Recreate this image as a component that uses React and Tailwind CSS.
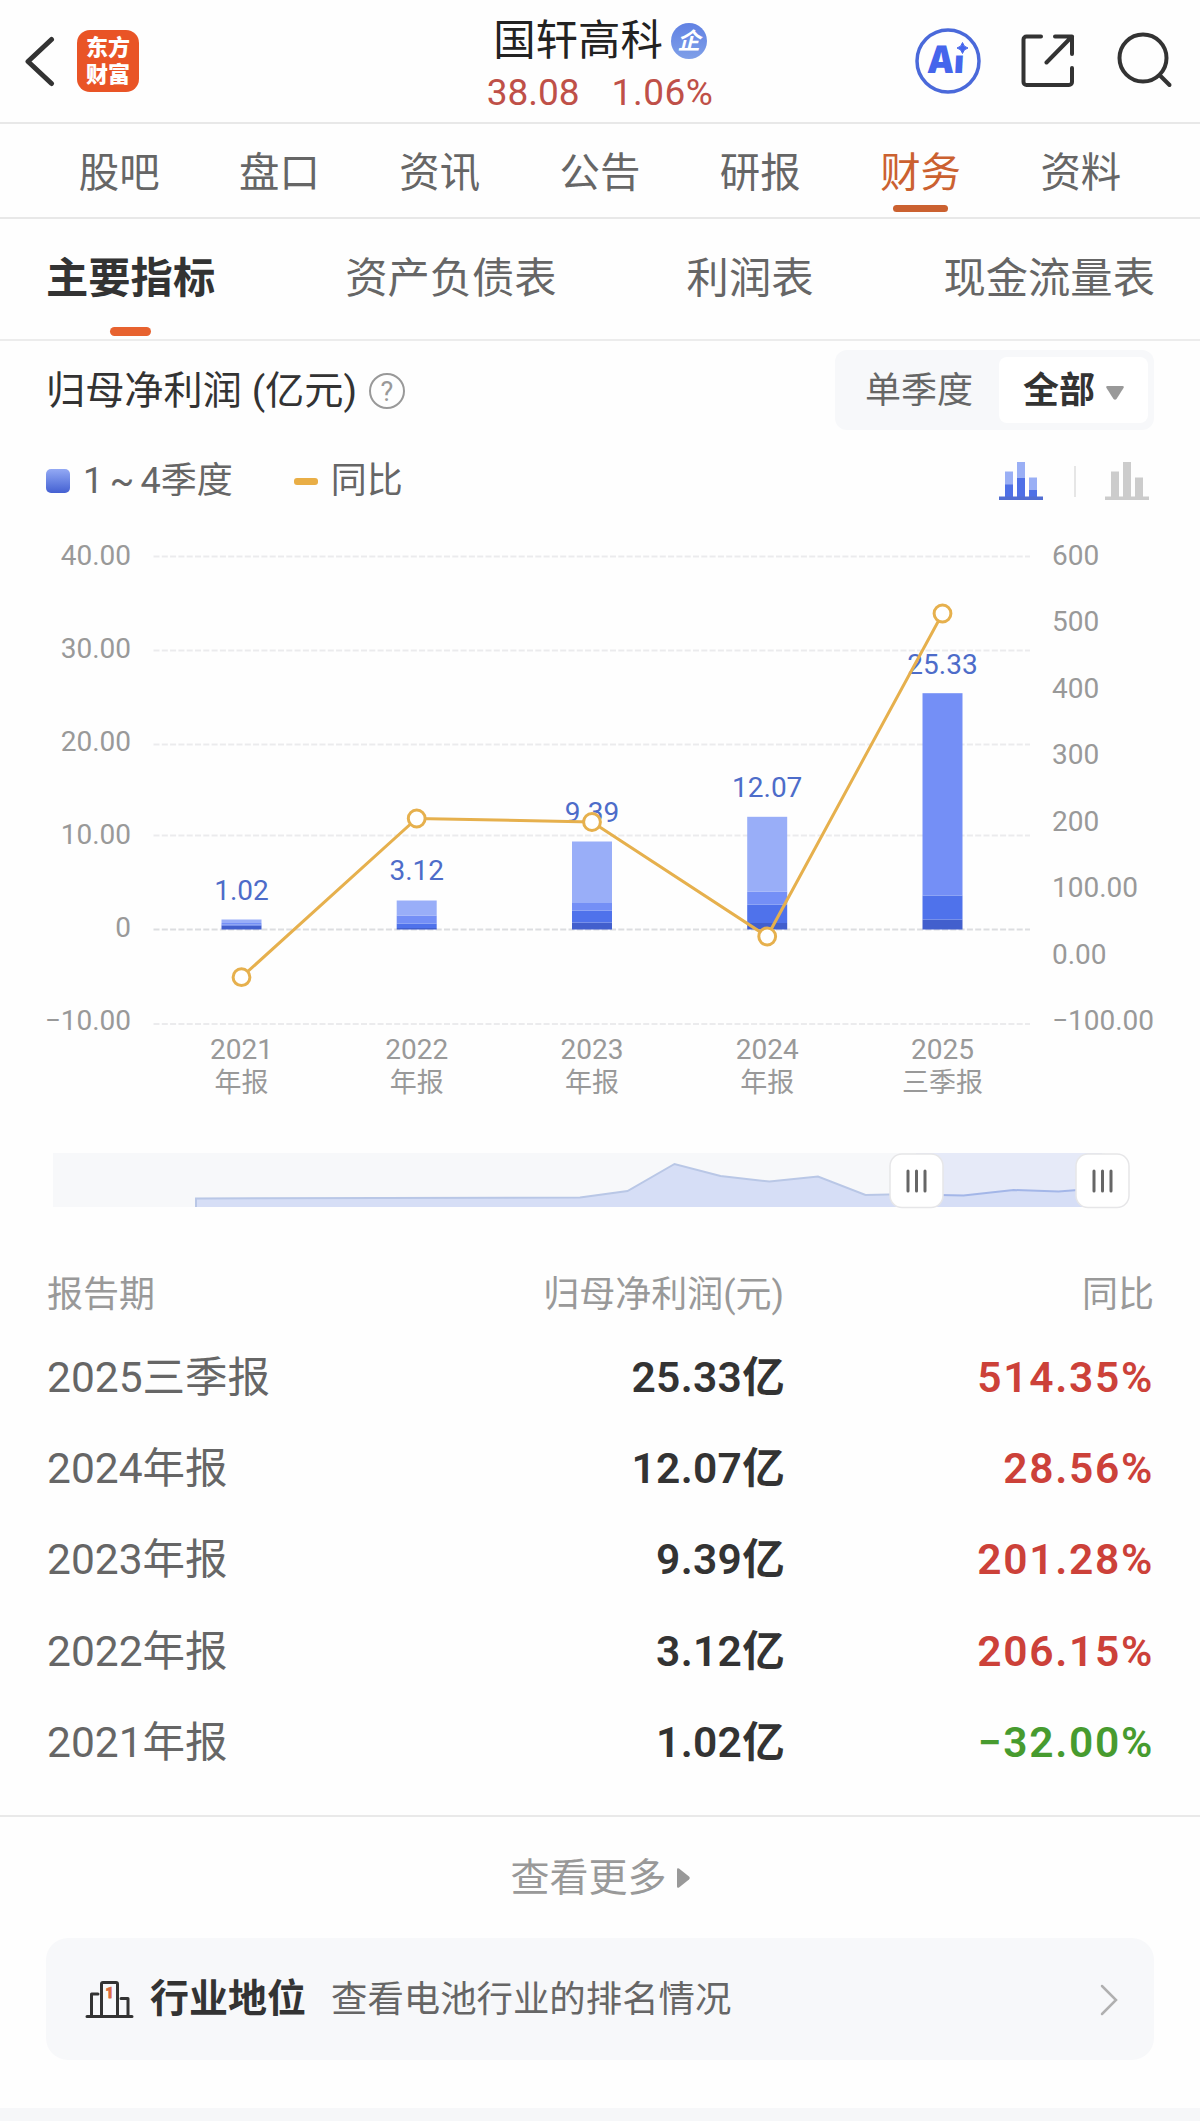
const NAV_TABS = ["股吧", "盘口", "资讯", "公告", "研报", "财务", "资料"];

const SUB_TABS = ["主要指标", "资产负债表", "利润表", "现金流量表"];

const ROWS = [
  {period: "2025三季报", profit: "25.33亿", yoy: "514.35%"},
  {period: "2024年报", profit: "12.07亿", yoy: "28.56%"},
  {period: "2023年报", profit: "9.39亿", yoy: "201.28%"},
  {period: "2022年报", profit: "3.12亿", yoy: "206.15%"},
  {period: "2021年报", profit: "1.02亿", yoy: "−32.00%"},
];

const LEFT_AXIS = [
  {label: "40.00", y: 555, line: 557},
  {label: "30.00", y: 648, line: 651},
  {label: "20.00", y: 741, line: 745},
  {label: "10.00", y: 834, line: 836},
  {label: "0", y: 927.5, line: 930},
  {label: "−10.00", y: 1020.5, line: 1024.5},
];

const RIGHT_AXIS = [
  {label: "600", y: 555},
  {label: "500", y: 621},
  {label: "400", y: 688},
  {label: "300", y: 754},
  {label: "200", y: 821},
  {label: "100.00", y: 887.5},
  {label: "0.00", y: 954.5},
  {label: "−100.00", y: 1020.5},
];

const QUARTER_COLORS = ["#425fcd", "#4f72eb", "#748ff6", "#99aef8"];

// stops: top edge of every quarter, Q1 first
const BARS = [
  {x: 241.5, year: "2021", name: "年报", value: "1.02", labelY: 890.5, dot: 977.7, stops: [926, 925, 923.5, 920]},
  {x: 416.7, year: "2022", name: "年报", value: "3.12", labelY: 870.5, dot: 819, stops: [928.5, 924, 916, 901]},
  {x: 592, year: "2023", name: "年报", value: "9.39", labelY: 812, dot: 822.5, stops: [923, 911, 903.5, 842]},
  {x: 767.2, year: "2024", name: "年报", value: "12.07", labelY: 787, dot: 937, stops: [923.5, 905, 892, 817.3]},
  {x: 942.5, year: "2025", name: "三季报", value: "25.33", labelY: 664, dot: 614, stops: [920, 896, 693.7]},
];

function Header() {
  return (
    <header className="grid h-[124px] grid-cols-[1fr_auto_1fr] border-b-2 border-[#e8e8e8]">
      <div className="flex items-start pt-[30px] pl-[24px]">
        <svg className="mt-[6px] h-[52px] w-[32px]" viewBox="0 0 32 52" fill="none" stroke="#333" strokeWidth="5" strokeLinecap="round" strokeLinejoin="round">
          <path d="M27.500 3.500 4 25.500l23.500 22" />
        </svg>
        <div className="ml-[21px] flex h-[62px] w-[62px] flex-col items-center justify-center rounded-[13px] bg-[#e95426] text-[22px] leading-[27px] font-black text-white">
          <span>东方</span>
          <span>财富</span>
        </div>
      </div>

      <div className="flex flex-col items-center pt-[18px]">
        <div className="flex items-center">
          <h1 className="text-[42.4px] leading-[46px] text-[#222]">国轩高科</h1>
          <span className="ml-[8px] flex h-[36px] w-[36px] items-center justify-center rounded-full bg-linear-to-b from-[#6181e3] to-[#7f9fe8] text-[23px] leading-none font-bold text-white italic">
            企
          </span>
        </div>
        <div className="mt-[6px] flex gap-[32px] text-[37px] leading-[46px] text-[#bf5048]">
          <span>38.08</span>
          <span className="tracking-[0.5px]">1.06%</span>
        </div>
      </div>

      <div className="flex items-start justify-end pt-[28px] pr-[27px]">
        <svg className="h-[66px] w-[66px]" viewBox="0 0 66 66">
          <text x="14" y="45" fontSize="38" fontWeight="900" fill="#4565ec" transform="skewX(-3)" className="font-['Inter']" textLength="37" lengthAdjust="spacingAndGlyphs">
            Ai
          </text>
          {/* the sparkle stands in for the dot of the i */}
          <path d="M40 12h17v15.500H40z" fill="#fefefe" />
          <path d="M47.500 14.500q1 4.500 5.500 5.500-4.500 1-5.500 5.500-1-4.500-5.500-5.500 4.500-1 5.500-5.500z" fill="#4565ec" stroke="#4565ec" />
          <circle cx="33" cy="33" r="31" fill="none" stroke="#4a69da" strokeWidth="3.500" />
        </svg>
        <svg className="mt-[6px] ml-[40px] h-[54px] w-[54px]" viewBox="0 0 54 54" fill="none" stroke="#333" strokeWidth="4" strokeLinecap="round" strokeLinejoin="round">
          <path d="M20 2.500H5.500a3 3 0 0 0-3 3V48a3 3 0 0 0 3 3H48a3 3 0 0 0 3-3V34" />
          <path d="M34 2.500h17V20M51 2.500 25.500 28.500" />
        </svg>
        <svg className="mt-[4px] ml-[42px] h-[58px] w-[56px]" viewBox="0 0 56 58" fill="none" stroke="#333" strokeWidth="4" strokeLinecap="round">
          <circle cx="26" cy="26" r="23.500" />
          <path d="m43 43.500 9.500 9.500" />
        </svg>
      </div>
    </header>
  );
}

function NavTabs() {
  return (
    <nav className="flex h-[95px] border-b-2 border-[#e8e8e8] px-[39px]">
      {NAV_TABS.map((tab) => {
        const active = tab === "财务";
        return (
          <div
            key={tab}
            className={`relative flex flex-1 justify-center pt-[25px] text-[40.4px] leading-[50px] ${
              active ? "text-[#cb6130]" : "text-[#666]"
            }`}>
            {tab}
            {active && (
              <span className="absolute bottom-[5px] h-[7px] w-[55px] rounded-full bg-[#cb6130]" />
            )}
          </div>
        );
      })}
    </nav>
  );
}

function SubTabs() {
  return (
    <nav className="flex h-[122px] justify-between border-b-2 border-[#ececec] pr-[45px] pl-[46px]">
      {SUB_TABS.map((tab, index) => (
        <div
          key={tab}
          className={`relative flex justify-center pt-[33px] text-[42.3px] leading-[54px] ${
            index === 0 ? "font-bold text-[#333]" : "text-[#666]"
          }`}>
          {tab}
          {index === 0 && (
            <span className="absolute bottom-[3px] h-[9px] w-[41px] rounded-full bg-[#e7622f]" />
          )}
        </div>
      ))}
    </nav>
  );
}

function ChartHeader() {
  return (
    <>
      <div className="mt-[9px] flex h-[80px] items-center justify-between px-[46px]">
        <div className="flex items-center">
          <h2 className="mt-[2px] text-[39.2px] leading-[50px] text-[#333]">归母净利润 (亿元)</h2>
          <svg className="mt-[2px] ml-[11px] h-[38px] w-[38px]" viewBox="0 0 38 38">
            <circle cx="19" cy="19" r="17" fill="none" stroke="#999" strokeWidth="2" />
            <text x="19" y="28.500" textAnchor="middle" fontSize="27" fill="#999">?</text>
          </svg>
        </div>
        <div className="flex h-[80px] w-[319px] rounded-[12px] bg-[#f7f8fa] py-[7px] pr-[6px]">
          <div className="flex flex-1 items-center justify-center pt-[2px] pl-[4px] text-[36px] text-[#666]">
            单季度
          </div>
          <div className="flex w-[149px] items-center rounded-[8px] bg-white pt-[2px] pl-[24px] text-[36px] font-bold text-[#333]">
            全部
            <svg className="mt-[4px] ml-[11px] h-[14px] w-[18px]" viewBox="0 0 18 14">
              <path d="M1.500 0h15q2 0 1 2l-7 11q-1.500 1.500-3 0L.5 2q-1-2 1-2z" fill="#999" />
            </svg>
          </div>
        </div>
      </div>

      <div className="mt-[26px] flex h-[50px] items-center pr-[51px] pl-[46px] text-[36px] text-[#666]">
        <span className="h-[24px] w-[24px] rounded-[5px] bg-linear-to-b from-[#94a9f4] to-[#4560d2]" />
        <span className="ml-[13px] [word-spacing:-2.5px]">1 ~ 4季度</span>
        <span className="ml-[61px] h-[7px] w-[24px] rounded-[3px] bg-[#e9ae46]" />
        <span className="ml-[13px]">同比</span>
        <svg className="ml-auto h-[38px] w-[44px]" viewBox="0 0 44 38">
          <path d="M6 9.500h8V36H6zM18 0h8v36h-8zM30 15.500h8V36h-8z" fill="#9aaff5" />
          <path d="M6 22.500h8V36H6zM18 16h8v20h-8zM30 28h8v8h-8z" fill="#4f70e6" />
          <path d="M0 34.500h44V38H0z" fill="#526ed2" />
        </svg>
        <span className="ml-[31px] h-[31px] w-[2px] bg-[#e6e6e6]" />
        <svg className="ml-[29px] h-[38px] w-[44px]" viewBox="0 0 44 38">
          <path d="M6 9.500h8V36H6zM18 0h8v36h-8zM30 15.500h8V36h-8zM0 34.500h44V38H0z" fill="#ccc" />
        </svg>
      </div>
    </>
  );
}

function ProfitChart() {
  return (
    <svg className="mt-[24px] block h-[580px] w-[1200px]" viewBox="0 530.500 1200 580" fontSize="28">
      {LEFT_AXIS.map((tick) => (
        <g key={tick.label}>
          <line x1="153.500" x2="1030" y1={tick.line} y2={tick.line} stroke={tick.label === "0" ? "#dcdde0" : "#ebebed"} strokeWidth="2" strokeDasharray="6 2.300" />
          <text x="131" y={tick.y + 10} textAnchor="end" fill="#999">{tick.label}</text>
        </g>
      ))}
      {RIGHT_AXIS.map((tick) => (
        <text key={tick.label} x="1052" y={tick.y + 10} fill="#999">{tick.label}</text>
      ))}

      {BARS.map((bar) => (
        <g key={bar.year} textAnchor="middle">
          {bar.stops.map((top, i) => {
            const bottom = i === 0 ? 930 : bar.stops[i - 1];
            return (
              <rect key={top} x={bar.x - 20} y={top} width="40" height={bottom - top} fill={QUARTER_COLORS[i]} />
            );
          })}
          <text x={bar.x} y={bar.labelY + 10} fill="#4d6cc9">{bar.value}</text>
          <text x={bar.x} y="1059" fill="#999">{bar.year}</text>
          <text x={bar.x} y="1092.500" fontSize="27" fill="#999">{bar.name}</text>
        </g>
      ))}

      {/* YoY line */}
      <polyline points={BARS.map((bar) => `${bar.x},${bar.dot}`).join(" ")} fill="none" stroke="#e6b04d" strokeWidth="3" />
      {BARS.map((bar) => (
        <circle key={bar.year} cx={bar.x} cy={bar.dot} r="8.400" fill="#fff" stroke="#e6b04d" strokeWidth="3" />
      ))}
    </svg>
  );
}

function Handle({x}) {
  return (
    <g transform={`translate(${x} 0)`}>
      <rect x="1" y="1" width="53" height="53.500" rx="12" fill="#fff" stroke="#e6e6e8" strokeWidth="1.500" />
      <path d="M19 18v20M27.500 18v20M36 18v20" stroke="#666" strokeWidth="3" strokeLinecap="round" />
    </g>
  );
}

function RangeSlider() {
  return (
    <svg className="mt-[43px] ml-[52px] block h-[56px] w-[1080px]" viewBox="0 0 1080 56">
      <path d="M1 0h1052v54H1z" fill="#f7f8fa" />
      <path d="M864 0h186v54H864z" fill="#e6eaf8" />
      <path d="M144 54V45.500l384-1 47.500-6.500 47-27 46 12 49 5.500 48.500-5 47.500 18.500 98 .5 50-5.500 45 1.500 45-3.500V54z" fill="#d6def6" />
      <path d="M144 54V45.500l384-1 47.500-6.500 47-27 46 12 49 5.500 48.500-5 47.500 18.500 47-1" fill="none" stroke="#b9c7e6" strokeWidth="2" />
      <path d="M864 41.500l47.500 1 50-5.500 45 1.500 45-3.500" fill="none" stroke="#a3b6e8" strokeWidth="2" />
      <Handle x={837} />
      <Handle x={1023} />
    </svg>
  );
}

function ReportTable() {
  return (
    <section className="mt-[61px] border-b-2 border-[#e9e9e9] pr-[46px] pb-[27px] pl-[47px]">
      <div className="grid grid-cols-[400px_337px_1fr] text-[36px] leading-[50px] text-[#999]">
        <span>报告期</span>
        <span className="text-right">归母净利润(元)</span>
        <span className="text-right">同比</span>
      </div>
      <div className="mt-[12px]">
        {ROWS.map((row) => (
          <div
            key={row.period}
            className="grid h-[91.3px] grid-cols-[400px_338px_1fr] items-center text-[42.5px] leading-[50px]">
            <span className="text-[#666]">{row.period}</span>
            <span className="text-right font-semibold tracking-[0.3px] text-[#333]">{row.profit}</span>
            <span
              className={`text-right font-semibold tracking-[1.7px] ${
                row.yoy.startsWith("−") ? "text-[#479b2f]" : "text-[#cc4139]"
              }`}>
              {row.yoy}
            </span>
          </div>
        ))}
      </div>
    </section>
  );
}

function IndustryCard() {
  return (
    <div className="mx-[46px] mt-[35px] flex h-[122px] items-center rounded-[22px] bg-[#f7f8fa] pr-[36px] pl-[39px]">
      <svg className="h-[40px] w-[49px]" viewBox="0 0 49 40" fill="none" stroke="#333" strokeWidth="3" strokeLinecap="round" strokeLinejoin="round">
        <path d="M2 37.500h45M6.500 37V15h6.500M16.500 37V5q0-1.500 1.500-1.500h13q1.500 0 1.500 1.500v32M36 19.500h7V37" />
        <text x="24.500" y="19" textAnchor="middle" fontSize="14" fontWeight="900" fill="#dc6c3c" stroke="#dc6c3c" strokeWidth="0.800">1</text>
      </svg>
      <span className="ml-[16px] text-[39px] leading-[50px] font-bold text-[#333]">行业地位</span>
      <span className="mt-[2px] ml-[25px] text-[36.4px] leading-[50px] text-[#666]">查看电池行业的排名情况</span>
      <svg className="mt-[2px] ml-auto h-[32px] w-[18px]" viewBox="0 0 18 32" fill="none" stroke="#b0b0b0" strokeWidth="2.500" strokeLinecap="round">
        <path d="m2 2 14 14L2 30" />
      </svg>
    </div>
  );
}

export default function App() {
  return (
    <div className="flex h-[2121px] w-[1200px] flex-col overflow-hidden bg-[#fefefe] font-['Roboto','Noto_Sans_CJK_SC',sans-serif]">
      <Header />
      <NavTabs />
      <SubTabs />
      <ChartHeader />
      <ProfitChart />
      <RangeSlider />
      <ReportTable />
      <div className="mt-[36px] flex items-center justify-center text-[39px] leading-[50px] text-[#999]">
        查看更多
        <svg className="ml-[10px] h-[20px] w-[13px]" viewBox="0 0 13 20">
          <path d="M0 1.500Q0-.5 2 .5l10 8q1.500 1.500 0 3l-10 8q-2 1-2-1z" fill="#999" />
        </svg>
      </div>
      <IndustryCard />
      <div className="mt-auto h-[13px] shrink-0 bg-[#f6f7f9]" />
    </div>
  );
}
